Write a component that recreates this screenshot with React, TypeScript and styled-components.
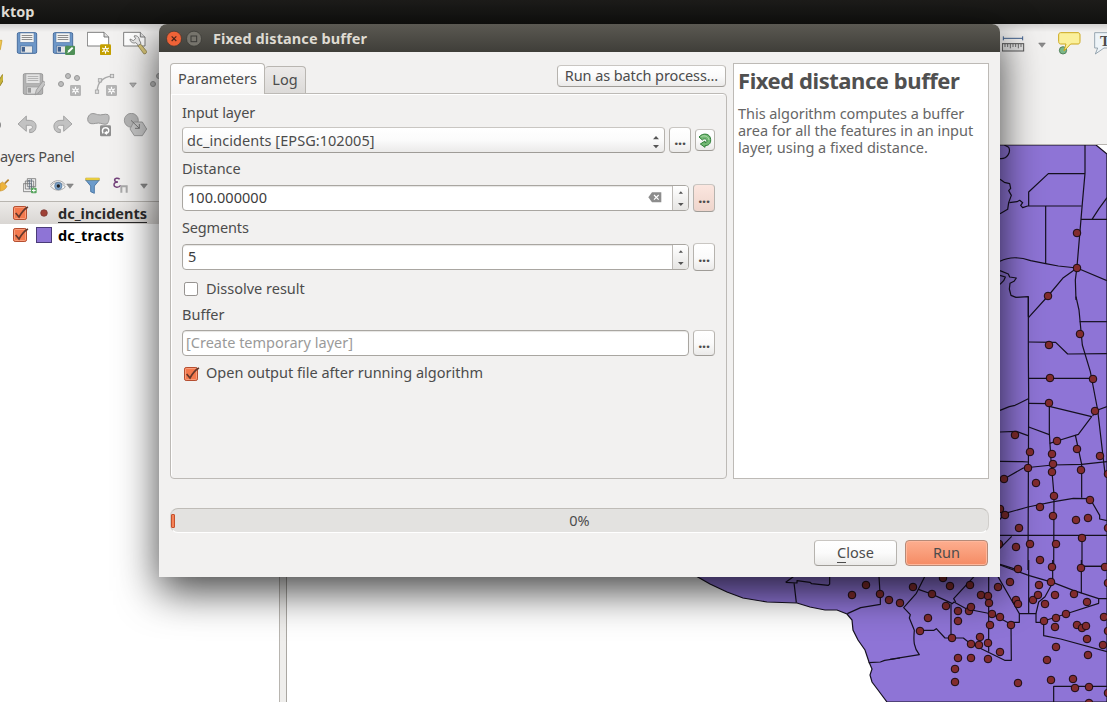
import React from 'react';
import styled, { createGlobalStyle, css } from 'styled-components';

const GlobalStyle = createGlobalStyle`
  * { box-sizing: border-box; }
  body { margin: 0; overflow: hidden; background: #f2f1f0; }
  svg { display: block; flex: none; }
`;

const Desktop = styled.div`
  position: relative;
  width: 1107px;
  height: 702px;
  overflow: hidden;
  display: flex;
  flex-direction: column;
  background: #f2f1f0;
  color: #4c4c4c;
  font: 14.5px/20px 'Noto Sans', 'Open Sans', sans-serif;
  white-space: nowrap;
`;

const Txt = styled.span<{ $ls?: number }>`
  letter-spacing: ${p => p.$ls ?? 0}px;
`;

const TopBar = styled.header`
  flex: none;
  height: 24px;
  padding-left: 1px;
  background: linear-gradient(#1d1c1a, #11110f);
  color: #dfdbd2;
  font-weight: 700;
  line-height: 23px;
`;

const Toolbars = styled.div`
  flex: none;
  height: 120px;
  display: flex;
  justify-content: space-between;
  background: linear-gradient(#d2d1d0, #f2f1f0 8px);
`;

const ToolRows = styled.div`
  display: flex;
  flex-direction: column;
  padding-top: 7px;
  gap: 17px;
`;

const ToolRow = styled.div<{ $start: number }>`
  display: flex;
  align-items: center;
  height: 24px;
  gap: 12px;
  margin-left: ${p => p.$start}px;
`;

const EditTools = styled.div`
  display: flex;
  align-items: center;
  gap: 12px;
  margin-left: 6px;
`;

const RightTools = styled.div`
  width: 105px;
  display: flex;
  gap: 12px;
  padding-top: 8px;
  overflow: hidden;
`;

const Workspace = styled.div`
  flex: 1;
  min-height: 0;
  display: flex;
`;

const Panel = styled.aside`
  width: 280px;
  display: flex;
  flex-direction: column;
`;

const PanelTitle = styled.div`
  height: 26px;
  line-height: 24px;
`;

const PanelTools = styled.div`
  height: 31px;
  display: flex;
  align-items: center;
`;

const PanelIconSlot = styled.div<{ $w: number }>`
  width: ${p => p.$w}px;
  flex: none;
  display: flex;
  align-items: center;
`;

const Tree = styled.div`
  flex: 1;
  border-top: 1px solid #b8b5b0;
  border-right: 1px solid #b8b5b0;
  background: #fff;
`;

const LayerRow = styled.div<{ $active?: boolean }>`
  display: flex;
  align-items: center;
  height: 22px;
  padding-left: 12px;
  font-weight: 700;
  color: #000;
  ${p => p.$active && css`
    color: #2a2a2a;
    background: linear-gradient(#eceae8, #d9d6d3);
  `}
`;

const LayerName = styled.span<{ $active?: boolean }>`
  line-height: 17px;
  margin-top: 2px;
  border-bottom: 1px solid ${p => (p.$active ? '#2a2a2a' : 'transparent')};
`;

const Symbol = styled.div`
  width: 29px;
  padding-left: 7px;
`;

const Splitter = styled.div`
  width: 7px;
  background: #efeeec;
  border-right: 1px solid #aaa7a2;
`;

const MapCanvas = styled.div`
  flex: 1;
  background: #fff;
  border-top: 1px solid #b8b5b0;
  overflow: hidden;
`;

const Dialog = styled.section`
  position: absolute;
  left: 159px;
  top: 24px;
  width: 841px;
  height: 553px;
  display: flex;
  flex-direction: column;
  border-radius: 8px 8px 0 0;
  background: #f2f1f0;
  box-shadow: 0 14px 42px rgba(0, 0, 0, 0.74);
`;

const TitleBar = styled.div`
  flex: none;
  height: 28px;
  display: flex;
  align-items: center;
  padding: 1px 0 0 7px;
  border-radius: 8px 8px 0 0;
  background: linear-gradient(#5b5952, #3f3e39);
  color: #dfdbd2;
  font-weight: 700;
  svg { margin-right: 4px; }
`;

const DialogTitle = styled(Txt)`
  margin: -2px 0 0 7px;
`;

const Body = styled.div`
  flex: 1;
  display: flex;
  flex-direction: column;
  padding: 11px 11px 12px;
`;

const Columns = styled.div`
  display: flex;
  gap: 6px;
  height: 416px;
`;

const TabColumn = styled.div`
  width: 557px;
  display: flex;
  flex-direction: column;
`;

const TabStrip = styled.div`
  position: relative;
  z-index: 1;
  height: 31px;
  display: flex;
  align-items: flex-end;
`;

const Tab = styled.div<{ $active?: boolean; $w: number }>`
  width: ${p => p.$w}px;
  height: ${p => (p.$active ? 31 : 27)}px;
  margin-bottom: ${p => (p.$active ? 0 : 1)}px;
  line-height: ${p => (p.$active ? 28 : 24)}px;
  text-align: center;
  border: 1px solid #b9b6b1;
  border-bottom: 0;
  border-left-width: ${p => (p.$active ? 1 : 0)}px;
  border-radius: 4px 4px 0 0;
  background: ${p => (p.$active ? 'linear-gradient(#fff, #f4f3f2)' : 'linear-gradient(#eceae9, #dcdad8)')};
`;

const face = css`
  border: 1px solid #b6b3ae;
  border-top-color: #c9c6c2;
  border-bottom-color: #9f9c97;
  border-radius: 4px;
  background: linear-gradient(#fff, #fbfbfb 50%, #ebeae9);
`;

const Button = styled.button<{ $w: number; $h: number; $tone?: 'primary' | 'tint' }>`
  ${face}
  flex: none;
  width: ${p => p.$w}px;
  height: ${p => p.$h}px;
  padding: 0 0 2px;
  display: flex;
  align-items: center;
  justify-content: center;
  color: #4c4c4c;
  font: inherit;
  ${p => p.$tone === 'primary' && css`
    background: linear-gradient(#fdae8f, #f58b64);
    border-color: #b58a78;
    box-shadow: inset 0 0 0 1px #ffb79b;
  `}
  ${p => p.$tone === 'tint' && css`
    background: linear-gradient(#fbe6df, #eed5cc);
  `}
`;

const BatchButton = styled(Button)`
  margin: 0 1px 7px auto;
`;

const IconButton = styled(Button)`
  padding: 0;
`;

const TabPage = styled.div`
  flex: 1;
  margin-top: -1px;
  padding: 7px 11px 0;
  border: 1px solid #bdbab6;
  border-radius: 0 4px 4px 4px;
  box-shadow: inset 1px 1px 0 #fff;
`;

const Combo = styled.div`
  ${face}
  width: 483px;
  height: 26px;
  display: flex;
  align-items: center;
  justify-content: space-between;
  padding: 0 4px;
`;

const Line = styled.div<{ $h: number }>`
  display: flex;
  align-items: center;
  gap: 4px;
  height: ${p => p.$h}px;
  ${Txt} { margin-top: -2px; }
  ${Combo} ${Txt} { margin-top: 0; }
`;

const Field = styled.div<{ $placeholder?: boolean }>`
  width: 507px;
  height: 26px;
  display: flex;
  align-items: center;
  padding-left: ${p => (p.$placeholder ? 3 : 5)}px;
  border: 1px solid #a9a6a1;
  border-radius: 4px;
  background: #fff;
  box-shadow: inset 0 1px 1px #e6e5e3;
  color: ${p => (p.$placeholder ? '#9a9a9a' : '#3c3c3c')};
  overflow: hidden;
`;

const Stepper = styled.div`
  width: 16px;
  height: 24px;
  margin-left: 10px;
  flex: none;
  border-left: 1px solid #bdbab6;
  background: linear-gradient(#fff, #e6e5e3);
`;

const Spacer = styled.span`
  flex: 1;
`;

const Check = styled.div`
  display: flex;
  align-items: center;
  gap: 6px;
  padding-left: 1px;
  svg { margin-top: 2px; }
`;

const Dots = styled.span`
  font-weight: 700;
  letter-spacing: -0.2px;
`;

const Help = styled.div`
  width: 256px;
  padding: 2px 4px;
  border: 1px solid #bdbab6;
  background: #fff;
`;

const HelpTitle = styled.h1`
  margin: 0;
  font-size: 22px;
  line-height: 28px;
  font-weight: 700;
  letter-spacing: -0.44px;
  color: #505050;
`;

const HelpText = styled.p`
  margin: 11px 0 0;
  line-height: 17px;
  color: #666;
`;

const Progress = styled.div`
  position: relative;
  height: 25px;
  margin-top: 29px;
  border: 1px solid #bfbcb7;
  border-left-color: #d0cecb;
  border-right-color: #d0cecb;
  border-bottom-color: #fff;
  border-radius: 8px;
  background: #e3e2e0;
  text-align: center;
  line-height: 23px;
`;

const Chunk = styled.div`
  position: absolute;
  left: 0;
  top: 5px;
  width: 4px;
  height: 14px;
  border: 1px solid #c5502c;
  border-radius: 1px;
  background: #f48257;
`;

const Footer = styled.div`
  display: flex;
  justify-content: flex-end;
  gap: 8px;
  margin: 7px 1px 0 0;
`;

const Mnemonic = styled.span`
  border-bottom: 1px solid #4c4c4c;
`;

type IconProps = { children: React.ReactNode; w?: number; h?: number };
const Icon = ({ children, w = 24, h = 24 }: IconProps) => (
  <svg width={w} height={h} viewBox={`0 0 ${w * 3} ${h * 3}`} fill="none">{children}</svg>
);

const Sun = ({ x, y, color }: { x: number; y: number; color: string }) => (
  <g transform={`translate(${x} ${y})`}>
    <rect width="33" height="33" rx="4" fill={color} />
    <path d="M16.500 5v23M6.500 11l20 11M6.500 22l20-11" stroke="#fff" strokeWidth="3.500" />
    <circle cx="16.500" cy="16.500" r="6" fill="#fff" />
    <circle cx="16.500" cy="16.500" r="3" fill={color} />
  </g>
);

const Floppy = ({ gray }: { gray?: boolean }) => {
  const main = gray ? '#b3b3b3' : '#6d97c8';
  const edge = gray ? '#9b9b9b' : '#4a6f9e';
  return (
    <>
      <rect x="7" y="5" width="58" height="62" rx="4" fill={main} stroke={edge} strokeWidth="3" />
      <rect x="15" y="6" width="42" height="28" fill={gray ? '#e4e4e4' : '#f4f4f2'} stroke={edge} strokeWidth="1.500" />
      <path d="M20 13.500h32M20 19.500h32M20 25.500h32" stroke={gray ? '#aaa' : '#777'} strokeWidth="2.500" />
      <rect x="16" y="45" width="36" height="21" fill={gray ? '#dedede' : '#e8e8e6'} stroke={edge} strokeWidth="2" />
      <rect x="20" y="48" width="10" height="14" fill={gray ? '#999' : '#3f5f8c'} />
    </>
  );
};

const SaveIcon = () => <Icon><Floppy /></Icon>;

const SaveAsIcon = () => (
  <Icon>
    <Floppy />
    <rect x="42" y="44" width="30" height="28" rx="4" fill="#4f9057" />
    <path d="M49 66l3-8 11-10 4 4-11 11z" fill="#fff" />
  </Icon>
);

const NewLayoutIcon = () => (
  <Icon>
    <path d="M1 4h50l14 14v27H1z" fill="#fff" stroke="#666" strokeWidth="2.500" />
    <path d="M51 4v14h14" fill="#ddd" stroke="#666" strokeWidth="2.500" />
    <Sun x={39} y={40} color="#c4a000" />
  </Icon>
);

const LayoutManagerIcon = () => (
  <Icon>
    <path d="M2 4h50l14 14v27H2z" fill="#fff" stroke="#666" strokeWidth="2.500" />
    <path d="M52 4v14h14" fill="#ddd" stroke="#666" strokeWidth="2.500" />
    <path d="M44 43l7-6 20 24c2 4-5 10-9 7z" fill="#d9c77a" stroke="#7d703d" strokeWidth="2" />
    <path d="M33 15c8-3 16 3 16 12l5 10-7 6-9-8c-8 3-17-2-17-11l10 5 7-6z" fill="#eee" stroke="#777" strokeWidth="2.500" />
  </Icon>
);

const ToggleEditIcon = () => (
  <Icon>
    <path d="M42 60l6-14 22-38 10 6-22 35z" fill="#c9b43c" stroke="#8d7c1c" strokeWidth="2.500" />
  </Icon>
);

const FolderEdge = () => (
  <Icon><path d="M20 28h49l-5 28H20z" fill="#f0c64f" stroke="#c79a1f" strokeWidth="2" /></Icon>
);

const SaveEditsIcon = () => (
  <Icon>
    <Floppy gray />
    <path d="M42 69l4-15 20-27 9 6-21 28z" fill="#c4c4c4" stroke="#969696" strokeWidth="2.500" />
  </Icon>
);

const PointsIcon = () => (
  <Icon>
    <g fill="#bdbdbd" stroke="#989898" strokeWidth="3">
      <circle cx="12" cy="36" r="7.500" /><circle cx="33" cy="12" r="7.500" /><circle cx="60" cy="18" r="7.500" />
    </g>
    <Sun x={39} y={39} color="#b5b5b5" />
  </Icon>
);

const CurveIcon = () => (
  <Icon>
    <path d="M12 60C13 34 25 16 57 12" stroke="#aaa" strokeWidth="4" />
    <g fill="#ddd" stroke="#a2a2a2" strokeWidth="2.500">
      <rect x="7" y="54" width="10" height="10" /><rect x="16" y="20" width="10" height="10" /><rect x="52" y="7" width="10" height="10" />
    </g>
    <Sun x={39} y={39} color="#b5b5b5" />
  </Icon>
);

const MoveFeatureIcon = () => (
  <Icon><g fill="#bdbdbd" stroke="#989898" strokeWidth="3"><circle cx="12" cy="36" r="7.500" /><circle cx="30" cy="12" r="7.500" /></g></Icon>
);

const UndoIcon = () => (
  <Icon>
    <path d="M9 33L34 9v13h8c16 0 23 10 21 22-2 10-8 15-19 15V49c7 0 9-4 8-8-1-3-4-4-9-4h-9v18z" fill="#c2c2c2" stroke="#999" strokeWidth="2.500" strokeLinejoin="round" />
  </Icon>
);

const RedoIcon = () => (
  <Icon>
    <path d="M63 33L38 9v13h-8C14 22 7 32 9 44c2 10 8 15 19 15V49c-7 0-9-4-8-8 1-3 4-4 9-4h9v18z" fill="#c2c2c2" stroke="#999" strokeWidth="2.500" strokeLinejoin="round" />
  </Icon>
);

const RotateIcon = () => (
  <Icon>
    <path d="M5 9C12-2 23 2 32 5c11 3 22-4 31 0 6 5 3 20-2 27-8 5-18-2-27-2-11 1-20 5-28-1C2 25 0 16 5 9z" fill="#bdbdbd" stroke="#979797" strokeWidth="3" />
    <rect x="39" y="37" width="33" height="33" rx="4" fill="#8f8f8f" />
    <path d="M48 61c-4-9-1-17 8-17 7 0 10 5 9 10-1 5-5 7-9 6" stroke="#fff" strokeWidth="4.500" /><path d="M60 53v13l-9-6z" fill="#fff" />
  </Icon>
);

const SimplifyIcon = () => (
  <Icon>
    <circle cx="25" cy="22" r="21" fill="#b5b5b5" stroke="#8f8f8f" strokeWidth="2.500" />
    <path d="M32 27h26l13 21-13 20H34L21 48z" fill="#c6c6c6" stroke="#8f8f8f" strokeWidth="2.500" />
    <path d="M24 22l25 24M49 33v13H36" stroke="#666" strokeWidth="2.500" />
  </Icon>
);

const Caret = ({ color = '#8c8c8c' }: { color?: string }) => (
  <Icon w={8} h={9}><path d="M2 9h20L12 22z" fill={color} stroke="#6f6f6f" strokeWidth="1.500" /></Icon>
);

const RulerIcon = () => (
  <Icon>
    <path d="M4 19h58M4 13v12M62 13v12" stroke="#3f5f8f" strokeWidth="3" />
    <rect x="1" y="35" width="64" height="22" fill="#e3e3e3" stroke="#555" strokeWidth="3" />
    <path d="M9 36v9M17 36v9M25 36v13M33 36v9M41 36v9M49 36v13M57 36v9" stroke="#555" strokeWidth="2.500" />
  </Icon>
);

const TipIcon = () => (
  <Icon>
    <circle cx="15" cy="55" r="11" fill="#7cb787" stroke="#43734e" strokeWidth="2.500" />
    <path d="M8 2h52c4 0 6 3 6 7v19c0 5-2 8-6 8H38L18 57l6-21H8c-4 0-6-3-6-8V9c0-4 2-7 6-7z" fill="#fbf09b" stroke="#cda91c" strokeWidth="3" />
  </Icon>
);

const NoteBadge = styled.div`
  position: relative;
`;
const NoteLetter = styled.span`
  position: absolute;
  left: 6px;
  top: 0;
  font: 700 15px/18px 'Liberation Serif', serif;
`;
const AnnotationIcon = () => (
  <NoteBadge>
    <Icon><path d="M2 2h68v46H30L4 66l7-18H2z" fill="#eef4f8" stroke="#8797a3" strokeWidth="2.500" /></Icon>
    <NoteLetter>T</NoteLetter>
  </NoteBadge>
);

const BroomIcon = () => (
  <Icon w={10} h={18}>
    <path d="M26 8L14 20" stroke="#b9832a" strokeWidth="5" />
    <path d="M0 20l8-5 13 13C15 39 8 41 0 42z" fill="#eeb43c" stroke="#c9912a" strokeWidth="2" />
  </Icon>
);

const AddGroupIcon = () => (
  <Icon w={14} h={18}>
    <path d="M1 20h25v24H1zM7 12h25v24H7zM13 5h25v24H13z" fill="#eee" stroke="#777" strokeWidth="2.500" />
    <path d="M19 36V9l-5 5M25 36V6" stroke="#567" strokeWidth="2.500" />
    <rect x="24" y="32" width="17" height="17" rx="3" fill="#57a55e" /><path d="M32.500 35v11M27 40.500h11" stroke="#fff" strokeWidth="3" />
  </Icon>
);

const EyeIcon = () => (
  <Icon w={16} h={14}>
    <path d="M2 22C12 6 34 6 46 24 32 38 13 36 2 22z" fill="#f5f5f3" stroke="#999" strokeWidth="2.500" />
    <circle cx="25" cy="21" r="11" fill="#7fa3c7" stroke="#4f7399" strokeWidth="2" /><circle cx="25" cy="21" r="5" fill="#222" />
    <path d="M1 17C12 1 36 1 45 17" stroke="#999" strokeWidth="2.500" />
  </Icon>
);

const FilterIcon = () => (
  <Icon w={15} h={18}>
    <path d="M2 9h41L28 27v22l-11-5V27z" fill="#6b9bcb" stroke="#3d6c9e" strokeWidth="2.500" />
    <path d="M2 3h41v6H2z" fill="#f5dc4a" stroke="#bd9e20" strokeWidth="1.500" />
  </Icon>
);

const ExpressionIcon = () => (
  <Icon w={15} h={18}>
    <path d="M20 7C15 1 4 3 5 10c1 4 5 5 10 5-7 0-12 3-12 9 1 8 14 9 20 1" stroke="#75437c" strokeWidth="4.500" />
    <path d="M25 47V28h16v19" stroke="#aaa" strokeWidth="6" />
  </Icon>
);

const CheckIcon = ({ on }: { on?: boolean }) => (
  <Icon w={17} h={17}>
    <rect x="4.500" y="4.500" width="39" height="39" rx="5" fill={on ? '#f4794d' : '#fff'} stroke={on ? '#b44e30' : '#969390'} strokeWidth="3" />
    {on && <rect x="7.500" y="7.500" width="33" height="33" rx="3" stroke="#fba686" strokeWidth="2.500" />}
    {on && <path d="M11 24l10 12C28 23 34 13 48 6" stroke="#63382c" strokeWidth="5" />}
  </Icon>
);

const RefreshIcon = () => (
  <Icon w={14} h={15}>
    <path d="M3 12C14-2 38 1 38 20c1 13-8 18-17 18v5L7 33l14-9v5c6 0 7-4 5-8-4-5-10-4-13 0z" fill="#73b974" stroke="#2f7f38" strokeWidth="3" strokeLinejoin="round" />
    <path d="M10 11c10-6 22 0 23 10" stroke="#b5dfb1" strokeWidth="3" />
  </Icon>
);

const ClearIcon = () => (
  <Icon w={14} h={12}>
    <path d="M1 16L12 1h28v30H12z" fill="#8d8d8d" /><path d="M18 9l14 14M32 9L18 23" stroke="#fff" strokeWidth="3.500" />
  </Icon>
);

const StepArrows = () => (
  <Icon w={15} h={24}><path d="M17 23h13l-6.500-7zM15 51h17l-8.500 9z" fill="#555" /></Icon>
);

const ComboArrows = () => (
  <Icon w={8} h={24}><path d="M3 34h18l-9-10zM3 51h18l-9 10z" fill="#555" /></Icon>
);

const WindowButton = ({ kind }: { kind: 'close' | 'max' }) => (
  <Icon w={16} h={17}>
    <circle cx="24" cy="26" r="22.500" fill={kind === 'close' ? '#ee6237' : '#76746c'} stroke="#34332f" strokeWidth="2" />
    {kind === 'close'
      ? <path d="M17 19l14 14M31 19L17 33" stroke="#4b251a" strokeWidth="3.500" />
      : <rect x="15" y="18" width="17" height="17" stroke="#3b3a36" strokeWidth="3" />}
  </Icon>
);

const land = 'M696 576l14 8 17 8 16 6 24 4 30 1 13 4 15 3 12 0 10 4 5 6 1 10 5 10 7 10 4 12 3 7-2 6 2 7 6 8 9 12H1107V154L1096 145H800z';

const northBoundaries = [
  'M270 375V460L262 550 246 740 241 780 243 840',
  'M15 416C38 418 48 395 41 382L28 375',
  'M15 478L28 487 44 491 47 505 41 512 49 526 41 548 38 568 15 581',
  'M43 548L66 545 74 541 83 548 77 556 83 563 98 558H260',
  'M101 558V516L160 461H270',
  'M152 558V731',
  'M258 598H336M291 598L312 566 336 533',
  'M15 724C45 708 75 711 107 722L152 731 190 738 246 744 336 782',
  'M246 744L205 773 159 828 101 892',
  'M15 752L40 762 44 771 64 774 57 784 45 790 43 807 48 826 63 832 100 830V890',
  'M15 766L31 771 26 782 15 793',
];

const eastBoundaries = [
  'M243 20L252 60 262 165 286 245 308 360 330 550',
  'M100 20V200L101 320 99 840',
  'M254 95H336',
  'M101 156L182 157 218 192 336 191', 'M101 265H293',
  'M15 361L43 350 60 346 100 326', 'M101 340L162 341M163 349L290 380 250 433 186 453 164 460',
  'M163 341V430L168 510 177 615 176 840',
  'M15 426L64 424 99 437', 'M101 411L163 434', 'M15 514L82 515 99 516',
  'M27 567L85 534 173 525 260 523 336 515', 'M300 363L336 350',
  'M241 435L260 523V623', 'M15 688L30 670 99 651 177 635 235 625 285 626 314 676V687L336 692',
  'M15 736H336', 'M15 775L50 739', 'M261 736V840M261 829H336', 'M15 823L69 840M293 378L302 361',
];

const coastBoundaries = [
  'M287 67L310 50M287 67L321 69V62L360 67 365 71 415 76 419 72V50M312 68L319 128',
  'M472 161L512 143 571 133V115L567 50', 'M536 308L571 306 584 301 630 294',
];

const southBoundaries = [
  'M0 298L88 284C71 263 70 243 73 211L58 174 61 164 41 143 79 100 104 50',
  'M85 88L125 102 168 122 187 131 192 126 230 147 306 162 363 193 364 301H344L240 250 220 234H165L139 206 132 211H88',
  'M252 50L191 116 197 126', 'M183 132V234', 'M296 50V275',
  'M324 50L388 161V187H363M389 161H438V187H461V227L512 237 651 275',
  'M416 0V161', 'M330 15L418 47 490 68 550 91 626 116 651 116',
  'M461 183L527 162 626 130V116', 'M488 0V68L465 110 446 126 438 161', 'M574 0V100M574 19H651', 'M651 379H491V426',
];

const incidents: [number, number][] = [
  [1077, 233], [1077, 268], [1048, 296], [1080, 334], [1049, 345], [1050, 378], [1093, 379], [1049, 403], [1095, 411],
  [1015, 435], [1057, 441], [1030, 452], [1052, 454], [1077, 449], [1100, 456], [1028, 468], [1053, 464], [1052, 472], [1081, 470],
  [1004, 479], [1036, 483], [1054, 496], [1090, 500], [1000, 509], [1005, 515], [1040, 507], [1053, 516], [1076, 520], [1088, 518], [1108, 474], [1108, 528],
  [1019, 528], [1016, 547], [1030, 544], [1056, 544], [1082, 538], [999, 544], [1040, 560], [1052, 567], [1081, 568], [1018, 569], [1105, 567],
  [852, 595], [866, 585], [880, 594], [889, 600], [900, 603], [913, 587], [932, 594], [943, 578], [950, 586], [970, 585], [998, 587], [1010, 582],
  [928, 618], [946, 606], [958, 611], [958, 621], [969, 611], [971, 607], [981, 595], [988, 596], [989, 603], [992, 614], [1000, 617], [990, 625], [1011, 625],
  [920, 631], [952, 638], [980, 637], [988, 643], [971, 644], [979, 645], [1000, 652], [958, 658], [971, 658], [988, 659], [955, 669], [955, 682], [1018, 683],
  [1016, 600], [1018, 604], [1033, 600], [1038, 595], [1039, 585], [1051, 582], [1055, 595], [1045, 604], [1074, 594], [1087, 602], [1066, 614], [1056, 618], [1044, 621], [1055, 627],
  [1077, 625], [1082, 628], [1086, 626], [1104, 617], [1087, 639], [1056, 647], [1103, 645], [1088, 655], [1047, 660], [1051, 680], [1073, 679], [1075, 688], [1089, 687], [1108, 693], [1089, 703], [1108, 583], [1108, 631],
];

const Boundaries = ({ x, y, lines }: { x: number; y: number; lines: string[] }) => (
  <g transform={`translate(${x} ${y}) scale(0.33333)`} fill="none" stroke="#15101f" strokeWidth="3.600" strokeLinejoin="round">
    {lines.map(d => <path key={d} d={d} />)}
  </g>
);

const TractMap = () => (
  <svg width="820" height="557" viewBox="287 145 820 557">
    <path d={land} fill="#8e74d6" stroke="#15101f" strokeWidth="1.200" />
    <Boundaries x={995} y={20} lines={northBoundaries} />
    <Boundaries x={995} y={290} lines={eastBoundaries} />
    <Boundaries x={690} y={560} lines={coastBoundaries} />
    <Boundaries x={890} y={560} lines={southBoundaries} />
    <g fill="#822c2e" stroke="#180b12" strokeWidth="1">
      {incidents.map(([x, y]) => <circle key={`${x}-${y}`} cx={x} cy={y} r="3.800" />)}
    </g>
  </svg>
);

export default function App() {
  return (
    <Desktop>
      <GlobalStyle />
      <TopBar><Txt>ktop</Txt></TopBar>
      <Toolbars>
        <ToolRows>
          <ToolRow $start={-21}><FolderEdge /><SaveIcon /><SaveAsIcon /><NewLayoutIcon /><LayoutManagerIcon /></ToolRow>
          <ToolRow $start={-21}>
            <ToggleEditIcon />
            <EditTools><SaveEditsIcon /><PointsIcon /><CurveIcon /><Caret color="#b0b0b0" /><MoveFeatureIcon /></EditTools>
          </ToolRow>
          <ToolRow $start={-21}>
            <Icon><circle cx="54" cy="36" r="12" fill="#888" /></Icon>
            <UndoIcon /><RedoIcon /><RotateIcon /><SimplifyIcon />
          </ToolRow>
        </ToolRows>
        <RightTools>
          <ToolRow $start={0}><RulerIcon /><Caret /><TipIcon /><AnnotationIcon /></ToolRow>
        </RightTools>
      </Toolbars>
      <Workspace>
        <Panel>
          <PanelTitle><Txt $ls={-0.35}>ayers Panel</Txt></PanelTitle>
          <PanelTools>
            <PanelIconSlot $w={23}><BroomIcon /></PanelIconSlot>
            <PanelIconSlot $w={27}><AddGroupIcon /></PanelIconSlot>
            <PanelIconSlot $w={35}><EyeIcon /><Caret /></PanelIconSlot>
            <PanelIconSlot $w={28}><FilterIcon /></PanelIconSlot>
            <PanelIconSlot $w={27}><ExpressionIcon /></PanelIconSlot>
            <Caret />
          </PanelTools>
          <Tree>
            <LayerRow $active>
              <CheckIcon on />
              <Symbol><Icon w={16} h={16}><circle cx="24" cy="24" r="10" fill="#9f4136" stroke="#71302a" strokeWidth="2" /></Icon></Symbol>
              <LayerName $active>dc_incidents</LayerName>
            </LayerRow>
            <LayerRow>
              <CheckIcon on />
              <Symbol><Icon w={16} h={16}><rect x="1.500" y="1.500" width="45" height="45" fill="#8e74d6" stroke="#4a3b78" strokeWidth="3" /></Icon></Symbol>
              <LayerName><Txt $ls={0.15}>dc_tracts</Txt></LayerName>
            </LayerRow>
          </Tree>
        </Panel>
        <Splitter />
        <MapCanvas><TractMap /></MapCanvas>
      </Workspace>

      <Dialog>
        <TitleBar>
          <WindowButton kind="close" /><WindowButton kind="max" />
          <DialogTitle $ls={0.1}>Fixed distance buffer</DialogTitle>
        </TitleBar>
        <Body>
          <Columns>
            <TabColumn>
              <TabStrip>
                <Tab $active $w={95}><Txt>Parameters</Txt></Tab>
                <Tab $w={41}><Txt>Log</Txt></Tab>
                <BatchButton $w={169} $h={22}><Txt $ls={-0.1}>Run as batch process...</Txt></BatchButton>
              </TabStrip>
              <TabPage>
                <Line $h={24}><Txt $ls={-0.1}>Input layer</Txt></Line>
                <Line $h={30}>
                  <Combo><Txt $ls={0.05}>dc_incidents [EPSG:102005]</Txt><ComboArrows /></Combo>
                  <Button $w={22} $h={26}><Dots>...</Dots></Button>
                  <IconButton $w={20} $h={22}><RefreshIcon /></IconButton>
                </Line>
                <Line $h={28}><Txt>Distance</Txt></Line>
                <Line $h={30}>
                  <Field><Txt $ls={0.05}>100.000000</Txt><Spacer /><ClearIcon /><Stepper><StepArrows /></Stepper></Field>
                  <Button $w={22} $h={28} $tone="tint"><Dots>...</Dots></Button>
                </Line>
                <Line $h={29}><Txt $ls={-0.15}>Segments</Txt></Line>
                <Line $h={30}>
                  <Field><Txt>5</Txt><Spacer /><Stepper><StepArrows /></Stepper></Field>
                  <Button $w={22} $h={28}><Dots>...</Dots></Button>
                </Line>
                <Line $h={33}><Check><CheckIcon /><Txt>Dissolve result</Txt></Check></Line>
                <Line $h={20}><Txt>Buffer</Txt></Line>
                <Line $h={36}>
                  <Field $placeholder><Txt>[Create temporary layer]</Txt></Field>
                  <Button $w={22} $h={26}><Dots>...</Dots></Button>
                </Line>
                <Line $h={24}><Check><CheckIcon on /><Txt>Open output file after running algorithm</Txt></Check></Line>
              </TabPage>
            </TabColumn>
            <Help>
              <HelpTitle>Fixed distance buffer</HelpTitle>
              <HelpText>
                <Txt $ls={-0.04}>This algorithm computes a buffer</Txt><br />
                <Txt $ls={-0.03}>area for all the features in an input</Txt><br />
                <Txt>layer, using a fixed distance.</Txt>
              </HelpText>
            </Help>
          </Columns>
          <Progress><Chunk />0%</Progress>
          <Footer>
            <Button $w={83} $h={26}><Txt><Mnemonic>C</Mnemonic>lose</Txt></Button>
            <Button $w={83} $h={26} $tone="primary"><Txt>Run</Txt></Button>
          </Footer>
        </Body>
      </Dialog>
    </Desktop>
  );
}
